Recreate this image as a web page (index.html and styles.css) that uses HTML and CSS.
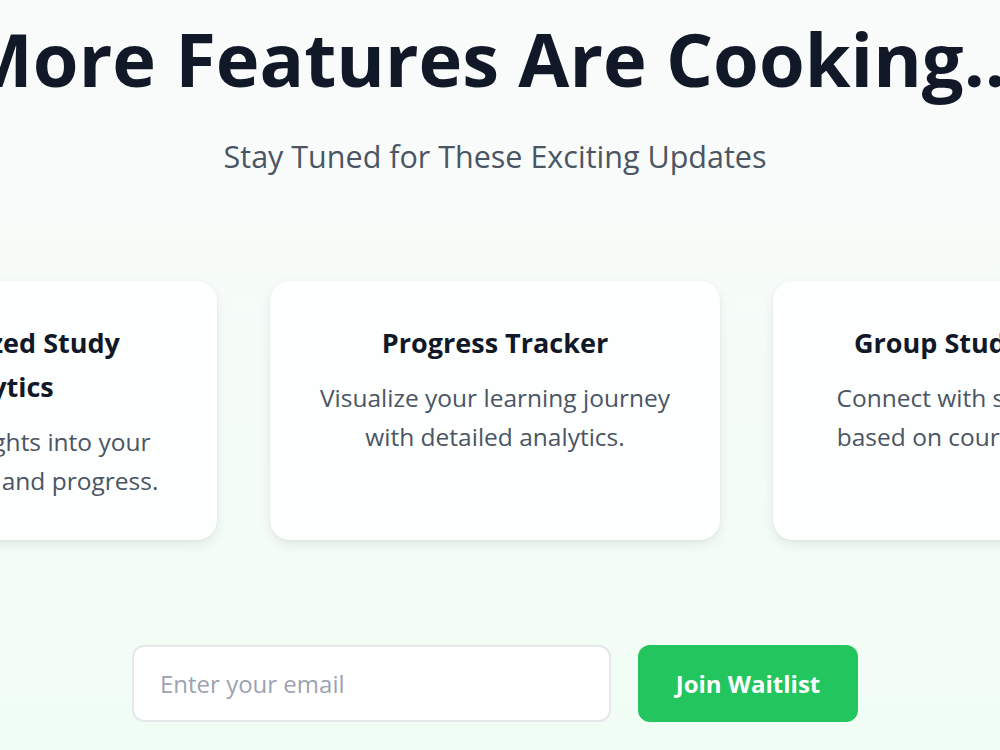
FILE: index.html
```html
<html>

<head>
	<title>
		Coming Soon
	</title>

	<link rel="stylesheet" href="styles.css">
</head>

<body>
	<div class="page">
		<div class="hero">
			<h1 class="hero-title">More Features Are Cooking...</h1>
			<p class="hero-subtitle">Stay Tuned for These Exciting Updates</p>
		</div>

		<div class="features">
			<div class="feature">
				<h3 class="feature-title">Personalized Study Analytics</h3>
				<p class="feature-text">Get smart insights into your learning habits and progress.</p>
			</div>
			<div class="feature">
				<h3 class="feature-title">Progress Tracker</h3>
				<p class="feature-text">Visualize your learning journey with detailed analytics.</p>
			</div>
			<div class="feature">
				<h3 class="feature-title">Group Study Sessions</h3>
				<p class="feature-text">Connect with study partners based on courses and goals.</p>
			</div>
		</div>

		<form class="waitlist" onsubmit="return false;">
			<input type="email" class="waitlist-input" placeholder="Enter your email" />
			<button type="submit" class="waitlist-button">Join Waitlist</button>
		</form>
	</div>
</body>

</html>
```

FILE: styles.css
```css
html,
body {
	margin: 0px;
	padding: 0px;
	width: 100%;
	height: 100%;
	overflow: hidden;
}

body {
	font-family: "Open Sans", "Noto Sans", sans-serif;
	background: linear-gradient(180deg, #fafbfb 0%, #f0fdf4 100%);
	color: #111827;
}

.page {
	width: 990px;
	padding-top: 14px;
}

.hero {
	display: flex;
	flex-direction: column;
	align-items: center;
	text-align: center;
}

.hero-title {
	margin: 0px;
	font-size: 74px;
	font-weight: 700;
	line-height: 90px;
	white-space: nowrap;
	color: #111827;
}

.hero-subtitle {
	margin: 32px 0px 0px 0px;
	font-size: 30.5px;
	line-height: 40px;
	color: #4b5563;
}

.features {
	display: flex;
	justify-content: center;
	gap: 53px;
	margin-top: 105px;
}

.feature {
	flex: 0 0 450px;
	box-sizing: border-box;
	padding: 40px 44px 40px 44px;
	background-color: #fdfefe;
	border-radius: 20px;
	box-shadow: 0px 4px 12px rgba(0, 0, 0, 0.08), 0px 1px 3px rgba(0, 0, 0, 0.04);
	text-align: center;
}

.feature-title {
	margin: 0px;
	font-size: 27px;
	font-weight: 700;
	line-height: 44px;
	color: #111827;
}

.feature-text {
	margin: 13px 0px 0px 0px;
	font-size: 24.5px;
	line-height: 39px;
	color: #4b5563;
}

.waitlist {
	display: flex;
	justify-content: center;
	gap: 27px;
	margin: 105px 0px 0px 0px;
}

.waitlist-input {
	width: 479px;
	height: 77px;
	box-sizing: border-box;
	padding: 0px 26px;
	border: 2px solid #e5e7eb;
	border-radius: 12px;
	background-color: #ffffff;
	font-family: inherit;
	font-size: 24px;
	color: #111827;
	outline: none;
}

.waitlist-input::placeholder {
	color: #9ca3af;
}

.waitlist-button {
	width: 220px;
	height: 77px;
	border: none;
	border-radius: 12px;
	background-color: #22c55e;
	color: #ffffff;
	font-family: inherit;
	font-size: 24px;
	font-weight: 700;
	cursor: pointer;
}
```
